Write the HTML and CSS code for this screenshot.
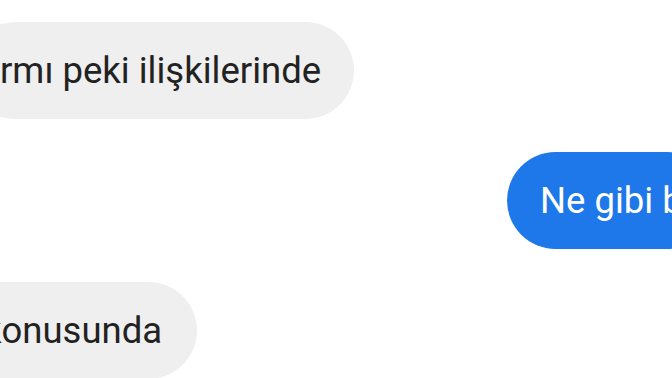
FILE: index.html
```html
<!DOCTYPE html>
<html lang="tr">
<head>
  <meta charset="UTF-8">
  <meta name="viewport" content="width=device-width, initial-scale=1.0">
  <title>Sohbet</title>
  <link rel="stylesheet" href="styles.css">
</head>
<body>

  <div class="chat">
    <div class="row row-in">
      <div class="bubble bubble-in">rmı peki ilişkilerinde</div>
    </div>

    <div class="row row-out">
      <div class="bubble bubble-out">Ne gibi b</div>
    </div>

    <div class="row row-in">
      <div class="bubble bubble-in cut">konusunda</div>
    </div>
  </div>

</body>
</html>
```

FILE: styles.css
```css
/* General Styles */
body {
  margin: 0;
  background-color: #fff;
  font-family: 'Roboto', 'Noto Sans', sans-serif;
  overflow: hidden;
  height: 378px;
}

/* Chat */
.chat {
  display: flex;
  flex-direction: column;
  gap: 33px;
  padding-top: 22px;
}

.row {
  display: flex;
}

.row-out {
  padding-left: 507px;
}

.bubble {
  font-size: 36.5px;
  line-height: 44px;
  padding: 27px 33px 26px;
  border-radius: 49px;
  white-space: nowrap;
  flex-shrink: 0;
}

.bubble-in {
  background-color: #efefef;
  color: #222;
  margin-left: -33px;
}

.bubble-in.cut {
  margin-left: -50px;
  padding-right: 35px;
}

.bubble-out {
  background-color: #1f78e9;
  color: #fff;
}
```
